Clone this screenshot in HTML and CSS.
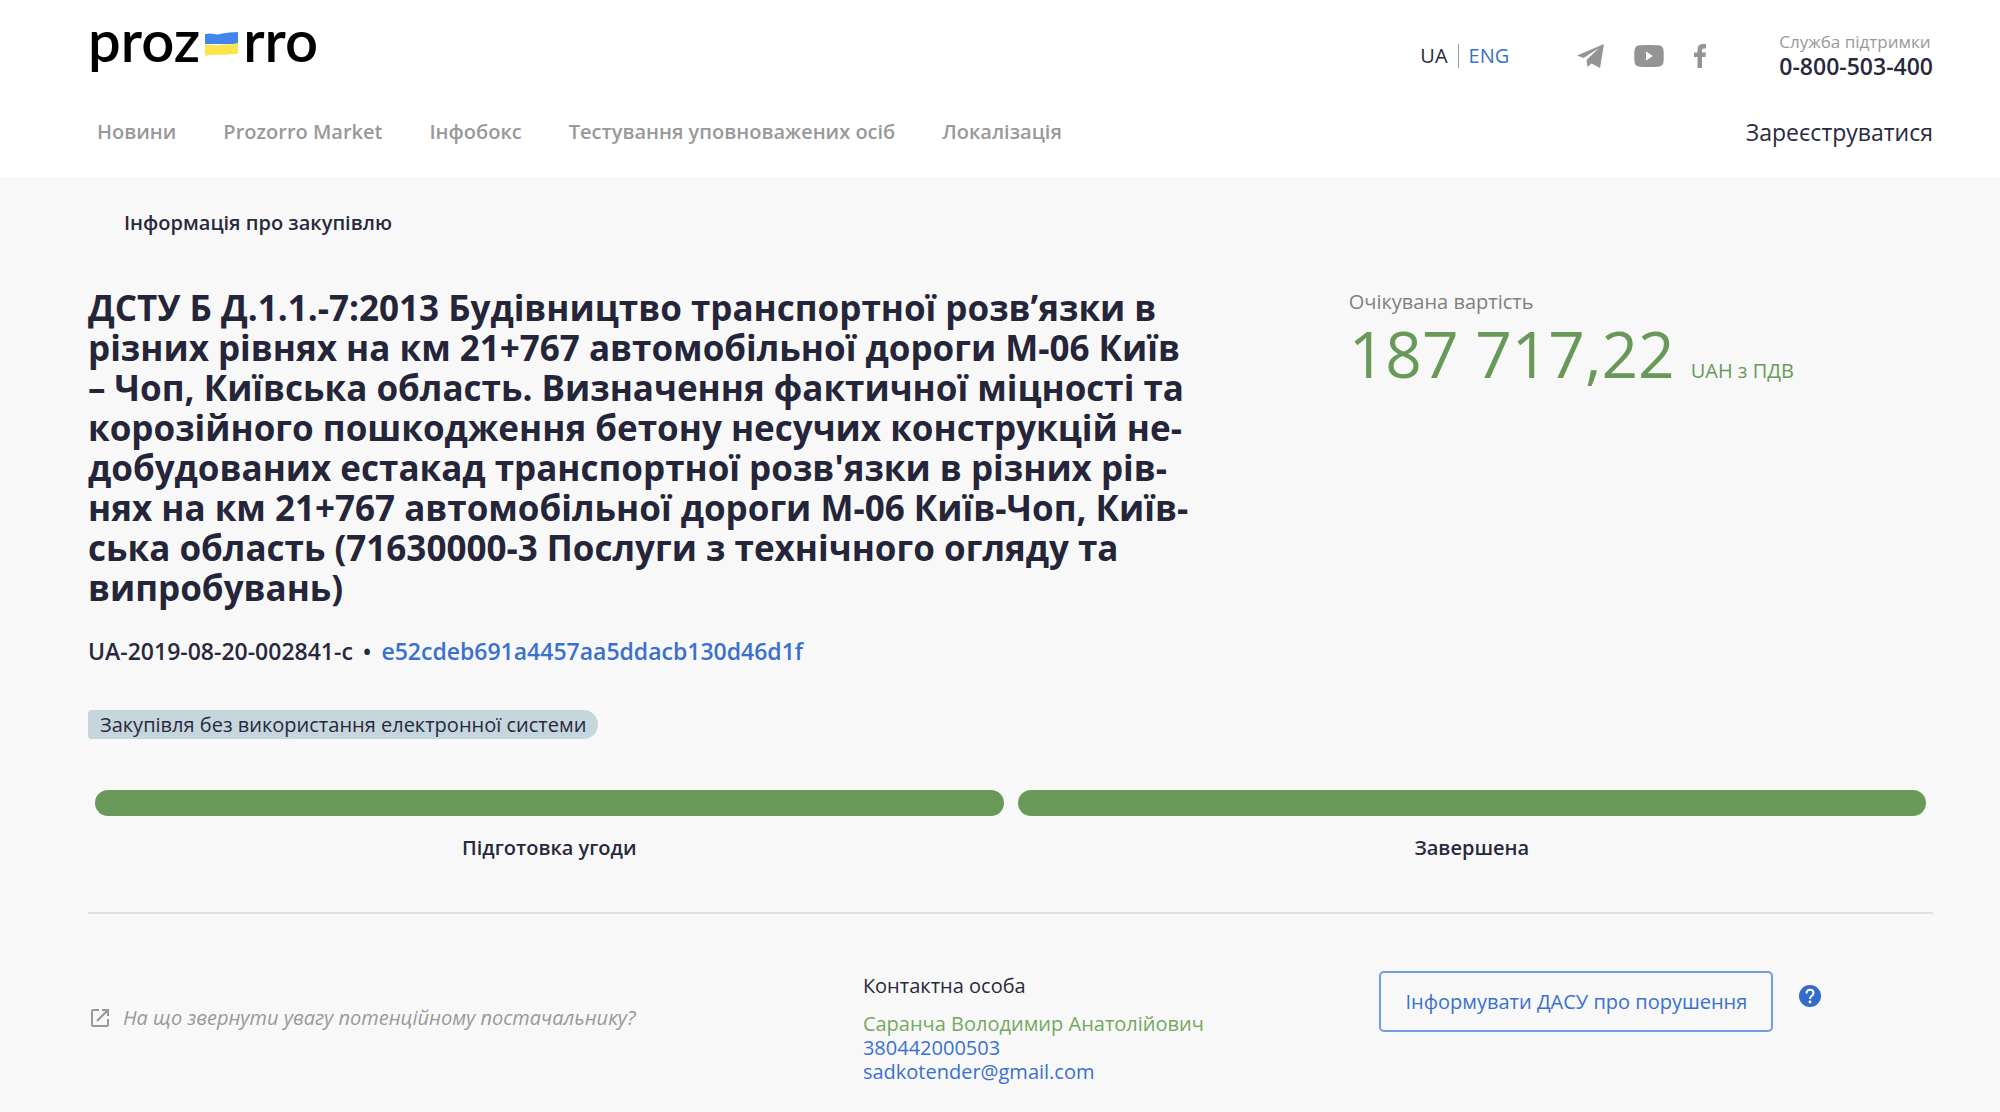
FILE: index.html
```html
<!DOCTYPE html>
<html lang="uk">
<head>
<meta charset="utf-8">
<meta name="viewport" content="width=device-width, initial-scale=1">
<title>Prozorro</title>
<link rel="stylesheet" href="styles.css">
</head>
<body>
<header class="header">
  <div class="topbar">
    <a class="logo" href="#" aria-label="prozorro">
      <span>proz</span>
      <svg class="logo-flag" width="33" height="24" viewBox="0 0 33 24" aria-hidden="true">
        <path fill="#4285ee" d="M0 2Q5 1 9 2Q13 3 17 1.500Q24 0 33 0V12H0Z"/>
        <path fill="#fce54c" d="M0 13Q5 12 9 13Q13 13.500 17 12.500Q24 13 33 11V22Q27 21.500 19 23Q13 22 9 23Q4 22.500 0 24Z"/>
      </svg>
      <span>rro</span>
    </a>
    <div class="tools">
      <div class="langs"><span class="lang">UA</span><a class="lang lang-alt" href="#">ENG</a></div>
      <div class="social">
        <a href="#" aria-label="Telegram"><svg width="27" height="24" viewBox="0 0 27 24"><path d="M27 0L23 24L14.500 19.500L10.500 23L9.500 16L22 4L6.500 14L0 11.500Z"/></svg></a>
        <a href="#" aria-label="YouTube"><svg width="30" height="22" viewBox="0 0 30 22"><path fill-rule="evenodd" d="M6 0.300Q15-.3 24 .3Q29 .5 29.500 5Q30 11 29.500 17Q29 21.500 24 21.700Q15 22.300 6 21.700Q1 21.500 .5 17Q0 11 .5 5Q1 .5 6 .3ZM12 6.500V15.500L19 11Z"/></svg></a>
        <a href="#" aria-label="Facebook"><svg width="12" height="24" viewBox="0 0 12 24"><path d="M3.500 24V13H0V8.500H3.500V6Q3.500 0 8.500 0H12V4.500H9.500Q8 4.500 8 6V8.500H12L11.500 13H8V24Z"/></svg></a>
      </div>
      <div class="support">
        <span class="support-label">Служба підтримки</span>
        <a class="support-phone" href="tel:0800503400">0-800-503-400</a>
      </div>
    </div>
  </div>
  <div class="menubar">
    <nav class="nav">
      <a href="#">Новини</a>
      <a href="#">Prozorro Market</a>
      <a href="#">Інфобокс</a>
      <a href="#">Тестування уповноважених осіб</a>
      <a href="#">Локалізація</a>
    </nav>
    <a class="register" href="#">Зареєструватися</a>
  </div>
</header>
<main class="main">
  <p class="crumb">Інформація про закупівлю</p>
  <section class="summary">
    <div class="tender">
      <h1 class="title">ДСТУ Б Д.1.1.-7:2013 Будівництво транспортної розв’язки в різних рівнях на км 21+767 автомобільної дороги М-06 Київ – Чоп, Київська область. Визначення фактичної міцності та корозійного пошкодження бетону несучих конструкцій не&shy;добудованих естакад транспортної розв'язки в різних рів&shy;нях на км 21+767 автомобільної дороги М-06 Київ-Чоп, Київ&shy;ська область (71630000-3 Послуги з технічного огляду та випробувань)</h1>
      <p class="ids">UA-2019-08-20-002841-c <span class="dot">•</span> <a class="hash" href="#">e52cdeb691a4457aa5ddacb130d46d1f</a></p>
      <span class="tag">Закупівля без використання електронної системи</span>
    </div>
    <div class="price">
      <p class="price-label">Очікувана вартість</p>
      <p class="price-value">187 717,22<span class="price-unit">UAH з ПДВ</span></p>
    </div>
  </section>
  <ol class="steps">
    <li>Підготовка угоди</li>
    <li>Завершена</li>
  </ol>
  <section class="details">
    <a class="hint" href="#">
      <svg width="18" height="18" viewBox="0 0 18 18" fill="none" stroke="currentColor" stroke-width="2" aria-hidden="true"><path d="M8 1H2Q1 1 1 2V16Q1 17 2 17H16Q17 17 17 16V10M11 1H17V7M17 1L6 12"/></svg>
      <span>На що звернути увагу потенційному постачальнику?</span>
    </a>
    <div class="contact">
      <h2 class="contact-title">Контактна особа</h2>
      <span class="contact-name">Саранча Володимир Анатолійович</span>
      <a href="tel:380442000503">380442000503</a>
      <a href="mailto:sadkotender@gmail.com">sadkotender@gmail.com</a>
    </div>
    <div class="report">
      <button class="report-button" type="button">Інформувати ДАСУ про порушення</button>
      <button class="help" type="button" aria-label="Довідка">
        <svg width="22" height="22" viewBox="0 0 22 22" aria-hidden="true"><circle cx="11" cy="11" r="11" fill="#356bcb"/><path d="M7.500 8.500Q7.500 4.800 11 4.800T14.500 8Q14.500 9.500 12.800 10.700T11 14" fill="none" stroke="#fff" stroke-width="2"/><circle cx="11" cy="17" r="1.400" fill="#fff"/></svg>
      </button>
    </div>
  </section>
</main>
</body>
</html>
```
FILE: styles.css
```css
* {
  box-sizing: border-box;
}

body {
  margin: 0;
  background: #f8f8f8;
  color: #29293d;
  font: 20px/24px "Open Sans", "Noto Sans", sans-serif;
}

a {
  color: #3a70d0;
  text-decoration: none;
}

h1, h2, p, ol {
  margin: 0;
  padding: 0;
}

svg {
  display: block;
}

.header,
.main {
  padding: 0 67px 0 88px;
}

.header {
  padding-bottom: 29px;
  background: #fff;
}

.topbar,
.menubar,
.tools,
.social,
.nav {
  display: flex;
  align-items: center;
}

.topbar,
.menubar {
  justify-content: space-between;
}

.topbar {
  height: 112px;
  margin-bottom: 4px;
}

.logo {
  display: flex;
  align-items: center;
  gap: 5px;
  margin-bottom: 32px;
  color: #000;
  font: 600 58px/64px Lato, sans-serif;
}

.logo-flag {
  margin-top: 8px;
}

.langs {
  display: flex;
}

.lang + .lang {
  margin-left: 10px;
  padding-left: 10px;
  border-left: 1px solid #999;
}

.social {
  gap: 30px;
  margin: 0 73px 0 68px;
}

.social svg {
  fill: #949494;
}

.support {
  display: flex;
  flex-direction: column;
  padding-bottom: 4px;
}

.support-label {
  color: #999;
  font-size: 17px;
}

.support-phone {
  color: #29293d;
  font-size: 23px;
  font-weight: 600;
}

.menubar {
  height: 32px;
}

.nav {
  gap: 47px;
  padding-left: 9px;
  font-weight: 600;
}

.nav a {
  color: #999;
}

.register {
  color: #29293d;
  font-size: 23px;
}

.main {
  padding-top: 34px;
  padding-bottom: 24px;
}

.crumb {
  padding-left: 36px;
  font-weight: 600;
}

.summary {
  display: grid;
  grid-template-columns: 41fr 19fr;
  margin-top: 53px;
}

.tender {
  padding-right: 156px;
}

.title {
  color: #25253a;
  font-size: 35px;
  line-height: 40px;
  font-weight: 700;
}

.ids {
  margin-top: 31px;
  font-size: 23px;
  line-height: 24px;
  font-weight: 600;
}

.dot {
  margin: 0 4px;
}

.tag {
  display: inline-block;
  margin-top: 47px;
  padding: 0 12px;
  border-radius: 4px 15px 15px 4px;
  background: #c5d6dd;
  line-height: 29px;
}

.price {
  padding-top: 2px;
}

.price-label {
  color: #808080;
}

.price-value {
  color: #689958;
  font-size: 64px;
  line-height: 80px;
}

.price-unit {
  margin-left: 16px;
  font-size: 20px;
}

.steps {
  display: grid;
  grid-template-columns: 1fr 1fr;
  gap: 14px;
  margin-top: 51px;
  padding: 0 7px 52px;
  border-bottom: 2px solid #dfe1e5;
  list-style: none;
  font-weight: 600;
  text-align: center;
}

.steps li::before {
  content: "";
  display: block;
  height: 26px;
  margin-bottom: 20px;
  border-radius: 13px;
  background: #689958;
}

.details {
  display: grid;
  grid-template-columns: 42% 28% 30%;
  margin-top: 57px;
}

.hint {
  display: flex;
  align-items: center;
  align-self: start;
  gap: 14px;
  margin-top: 35px;
  padding-left: 3px;
  color: #999;
  font-style: italic;
}

.contact {
  display: flex;
  flex-direction: column;
  align-items: flex-start;
}

.contact-title {
  margin: 3px 0 14px;
  font-size: 20px;
  font-weight: 400;
}

.contact-name {
  color: #75a860;
}

.report {
  display: flex;
  align-items: flex-start;
  gap: 26px;
}

.report-button {
  height: 61px;
  padding: 0 24px;
  border: 2px solid #749be0;
  border-radius: 5px;
  background: transparent;
  color: #3a70d0;
  font: inherit;
}

.help {
  margin-top: 14px;
  padding: 0;
  border: 0;
  background: none;
}
```
